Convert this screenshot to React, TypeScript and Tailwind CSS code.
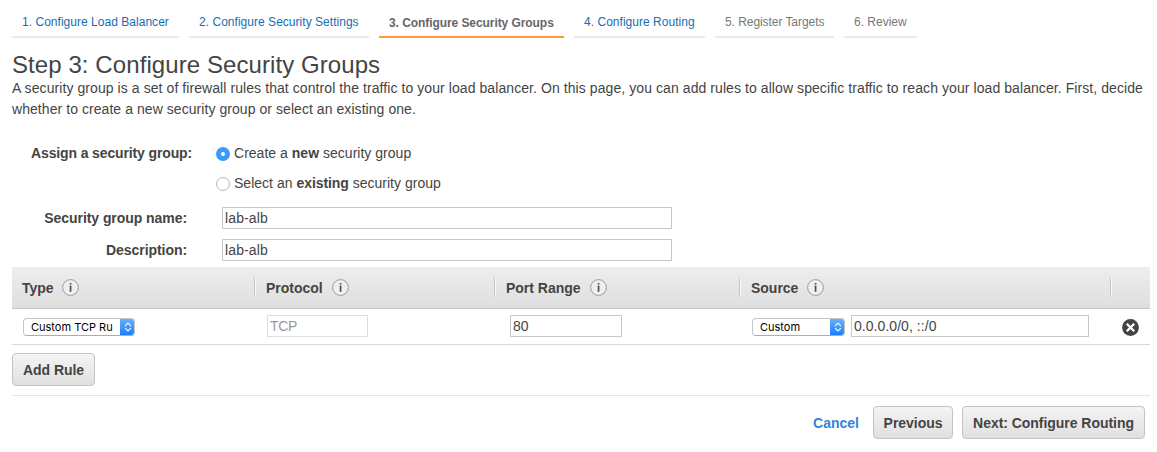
import type { ReactNode } from "react";

const tabs = [
  { label: "1. Configure Load Balancer", box: "w-[167px] border-[#eaeaea]", text: "text-[#146eb4] tracking-[0.03px]" },
  { label: "2. Configure Security Settings", box: "w-[180px] border-[#eaeaea]", text: "text-[#146eb4] tracking-[0.03px]" },
  { label: "3. Configure Security Groups", box: "w-[185px] border-[#ff9a2e]", text: "pt-px font-bold text-[#666] tracking-[-0.07px]" },
  { label: "4. Configure Routing", box: "w-[131px] border-[#eaeaea]", text: "text-[#146eb4] tracking-[0.03px]" },
  { label: "5. Register Targets", box: "w-[119px] border-[#eaeaea]", text: "text-[#777] tracking-[-0.06px]" },
  { label: "6. Review", box: "w-[73px] border-[#eaeaea]", text: "text-[#777]" },
];

function InfoIcon() {
  return (
    <svg className="size-[17px] shrink-0" viewBox="0 0 17 17" fill="none">
      <circle cx="8.5" cy="8.5" r="7.9" fill="#efefef" stroke="#999" strokeWidth="1" />
      <path d="M7.7 4h1.7v1.6H7.7zM7.7 6.6h1.7v6.1H7.7z" fill="#4c4c4c" />
    </svg>
  );
}

function Radio({ checked, children }: { checked?: boolean; children: ReactNode }) {
  return (
    <label className="flex h-[30px] items-center">
      {checked ? (
        <span className="mt-[2px] flex size-[14px] items-center justify-center rounded-full bg-[#3b99fc]">
          <span className="size-1 rounded-full bg-white" />
        </span>
      ) : (
        <span className="mt-[2px] size-[14px] rounded-full border border-[#b4b4b4] bg-white" />
      )}
      <span className="ml-1 tracking-[0.02px] whitespace-pre">{children}</span>
    </label>
  );
}

function Select({ value, width }: { value: string; width: string }) {
  return (
    <div className={`mt-[3px] flex h-[18px] overflow-hidden rounded-[4px] border border-[#c4c4c4] border-b-[#adadad] bg-white ${width}`}>
      <span className="flex-1 overflow-hidden pl-[7px] font-['Inter','Noto_Sans',sans-serif] text-[11px] leading-[17px] whitespace-nowrap text-black">
        {value}
      </span>
      <span className="-my-px -mr-px flex w-[15px] shrink-0 items-center justify-center bg-linear-to-b from-[#6bb3fa] to-[#0a7aff]">
        <svg className="h-[10px] w-[8px]" viewBox="0 0 8 10" fill="none" stroke="white" strokeWidth="1.1" strokeLinecap="round" strokeLinejoin="round">
          <path d="M1.4 3.7 4 1.2l2.6 2.5M1.4 6.3 4 8.8l2.6-2.5" />
        </svg>
      </span>
    </div>
  );
}

function Field({ value, box }: { value: string; box: string }) {
  return (
    <div className={`h-[22px] border bg-white pl-[2px] leading-[20px] ${box}`}>{value}</div>
  );
}

function HeaderCell({ label, box, text }: { label?: string; box: string; text?: string }) {
  return (
    <div className={`flex h-full items-center ${box}`}>
      {label && (
        <>
          <span className={`shrink-0 pt-[2px] font-bold tracking-[-0.02px] ${text}`}>{label}</span>
          <InfoIcon />
        </>
      )}
    </div>
  );
}

function Divider() {
  return <span className="h-[19px] w-[2px] shrink-0 border-l border-[#c4c4c4] bg-[#fafafa]" />;
}

function Button({ label, box }: { label: string; box: string }) {
  return (
    <button className={`h-[33px] rounded-[4px] border border-[#c4c4c4] bg-linear-to-b from-[#f4f4f4] to-[#e0e0e0] pt-[2px] text-center font-bold tracking-[-0.04px] whitespace-nowrap ${box}`}>
      {label}
    </button>
  );
}

export default function App() {
  return (
    <main className="h-[452px] w-[1157px] overflow-hidden bg-white pl-3 font-['Liberation_Sans',Arial,sans-serif] text-[14px] text-[#444]">
      <nav className="flex h-[38px] gap-[10px]">
        {tabs.map((t) => (
          <div key={t.label} className={`h-[38px] border-b-2 pt-[14px] pl-[10px] text-[12px] leading-[16px] whitespace-nowrap ${t.box}`}>
            <div className={t.text}>{t.label}</div>
          </div>
        ))}
      </nav>
      <h1 className="mt-[13px] h-[27px] text-[24px] leading-[28px] tracking-[0.08px] whitespace-nowrap">Step 3: Configure Security Groups</h1>
      <p className="h-[42px] leading-[21px] whitespace-nowrap">
        <span className="tracking-[0.077px]">A security group is a set of firewall rules that control the traffic to your load balancer. On this page, you can add rules to allow specific traffic to reach your load balancer. First, decide</span>
        <br />
        <span className="tracking-[0.06px]">whether to create a new security group or select an existing one.</span>
      </p>

      <section className="flex pt-[18px]">
        <div className="w-[204px] pl-[19px] leading-[30px] font-bold tracking-[-0.13px] whitespace-nowrap">Assign a security group:</div>
        <div>
          <Radio checked>Create a <b>new</b> security group</Radio>
          <Radio>Select an <b className="tracking-[-0.08px]">existing</b> security group</Radio>
        </div>
      </section>
      <section className="flex flex-col gap-[10px] pt-[9px]">
        <div className="flex h-[22px]">
          <div className="mr-[35px] w-[175px] text-right leading-[22px] font-bold tracking-[-0.06px] whitespace-nowrap">Security group name:</div>
          <Field value="lab-alb" box="w-[450px] border-[#c8c8c8] tracking-[0.12px]" />
        </div>
        <div className="flex h-[22px]">
          <div className="mr-[35px] w-[175px] text-right leading-[22px] font-bold tracking-[-0.06px] whitespace-nowrap">Description:</div>
          <Field value="lab-alb" box="w-[450px] border-[#c8c8c8] tracking-[0.12px]" />
        </div>
      </section>

      <section className="mt-[6px] w-[1138px]">
        <div className="flex h-[42px] items-center border-b border-[#c6c6c6] bg-linear-to-b from-[#eee] to-[#dedede]">
          <HeaderCell label="Type" box="w-[242px] pl-[10px]" text="w-[40px]" />
          <Divider />
          <HeaderCell label="Protocol" box="w-[238px] pl-[10px]" text="w-[66px]" />
          <Divider />
          <HeaderCell label="Port Range" box="w-[243px] pl-[10px]" text="w-[84px]" />
          <Divider />
          <HeaderCell label="Source" box="w-[369px] pl-[10px]" text="w-[56px]" />
          <Divider />
        </div>
        <div className="flex h-[36px] border-b border-[#d9d9d9] pt-[6px]">
          <div className="w-[254px] pl-[11px]"><Select value="Custom TCP Ru" width="w-[112px]" /></div>
          <div className="w-[243px] pl-px"><Field value="TCP" box="w-[101px] border-[#dedede] text-[#999] tracking-[-0.3px]" /></div>
          <div className="w-[243px] pl-px"><Field value="80" box="w-[112px] border-[#c8c8c8]" /></div>
          <Select value="Custom" width="w-[93px]" />
          <div className="ml-[6px]"><Field value="0.0.0.0/0, ::/0" box="w-[238px] border-[#c8c8c8] tracking-[0.05px]" /></div>
          <svg className="mt-[4px] ml-[33px] size-[17px]" viewBox="0 0 17 17">
            <circle cx="8.5" cy="8.5" r="8.4" fill="#444" />
            <path d="m4.8 4.8 7.4 7.4m0-7.4-7.4 7.4" stroke="white" strokeWidth="2.3" />
          </svg>
        </div>
        <div className="h-[51px] border-b border-[#e6e6e6] pt-[8px]">
          <Button label="Add Rule" box="w-[83px]" />
        </div>
      </section>

      <footer className="flex w-[1133px] items-center justify-end pt-[10px]">
        <a className="mr-[14px] pt-[2px] font-bold text-[#3184de]">Cancel</a>
        <Button label="Previous" box="mr-[9px] w-[80px]" />
        <Button label="Next: Configure Routing" box="w-[183px]" />
      </footer>
    </main>
  );
}
